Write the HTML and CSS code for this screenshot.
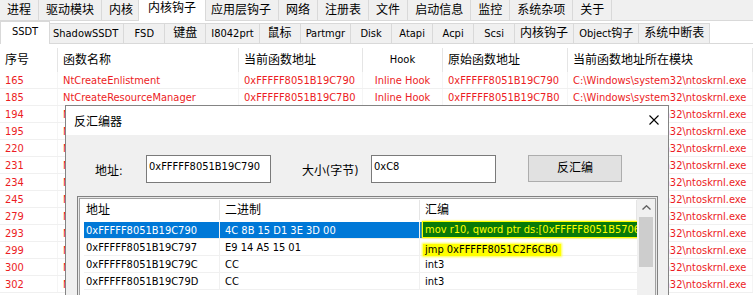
FILE: index.html
```html
<!DOCTYPE html>
<html lang="zh-CN">
<head>
    <meta charset="UTF-8">
    <title>内核钩子 - SSDT</title>
    <link rel="stylesheet" href="styles.css">
</head>
<body>
<div id="app">
    <!-- верхние вкладки -->
    <div class="tabs main-tabs">
        <div class="tab">进程</div>
        <div class="tab">驱动模块</div>
        <div class="tab">内核</div>
        <div class="tab active">内核钩子</div>
        <div class="tab">应用层钩子</div>
        <div class="tab">网络</div>
        <div class="tab">注册表</div>
        <div class="tab">文件</div>
        <div class="tab">启动信息</div>
        <div class="tab">监控</div>
        <div class="tab">系统杂项</div>
        <div class="tab">关于</div>
    </div>

    <div class="page">
        <div class="tabs sub-tabs">
            <div class="tab en active">SSDT</div>
            <div class="tab en">ShadowSSDT</div>
            <div class="tab en">FSD</div>
            <div class="tab">键盘</div>
            <div class="tab en">I8042prt</div>
            <div class="tab">鼠标</div>
            <div class="tab en">Partmgr</div>
            <div class="tab en">Disk</div>
            <div class="tab en">Atapi</div>
            <div class="tab en">Acpi</div>
            <div class="tab en">Scsi</div>
            <div class="tab">内核钩子</div>
            <div class="tab en">Object钩子</div>
            <div class="tab">系统中断表</div>
        </div>

        <div class="grid">
            <div class="grid-head">
                <div>序号</div>
                <div>函数名称</div>
                <div>当前函数地址</div>
                <div class="center en">Hook</div>
                <div>原始函数地址</div>
                <div>当前函数地址所在模块</div>
            </div>
            <div class="grid-row"><div>165</div><div>NtCreateEnlistment</div><div>0xFFFFF8051B19C790</div><div class="center">Inline Hook</div><div>0xFFFFF8051B19C790</div><div>C:\Windows\system32\ntoskrnl.exe</div></div>
            <div class="grid-row"><div>185</div><div>NtCreateResourceManager</div><div>0xFFFFF8051B19C7B0</div><div class="center">Inline Hook</div><div>0xFFFFF8051B19C7B0</div><div>C:\Windows\system32\ntoskrnl.exe</div></div>
            <!-- строки ниже закрыты окном, видны только номер и путь -->
            <div class="grid-row"><div>194</div><div>N</div><div></div><div></div><div></div><div>C:\Windows\system32\ntoskrnl.exe</div></div>
            <div class="grid-row"><div>195</div><div>N</div><div></div><div></div><div></div><div>C:\Windows\system32\ntoskrnl.exe</div></div>
            <div class="grid-row"><div>220</div><div>N</div><div></div><div></div><div></div><div>C:\Windows\system32\ntoskrnl.exe</div></div>
            <div class="grid-row"><div>231</div><div>N</div><div></div><div></div><div></div><div>C:\Windows\system32\ntoskrnl.exe</div></div>
            <div class="grid-row"><div>234</div><div>N</div><div></div><div></div><div></div><div>C:\Windows\system32\ntoskrnl.exe</div></div>
            <div class="grid-row"><div>245</div><div>N</div><div></div><div></div><div></div><div>C:\Windows\system32\ntoskrnl.exe</div></div>
            <div class="grid-row"><div>279</div><div>N</div><div></div><div></div><div></div><div>C:\Windows\system32\ntoskrnl.exe</div></div>
            <div class="grid-row"><div>293</div><div>N</div><div></div><div></div><div></div><div>C:\Windows\system32\ntoskrnl.exe</div></div>
            <div class="grid-row"><div>299</div><div>N</div><div></div><div></div><div></div><div>C:\Windows\system32\ntoskrnl.exe</div></div>
            <div class="grid-row"><div>300</div><div>N</div><div></div><div></div><div></div><div>C:\Windows\system32\ntoskrnl.exe</div></div>
            <div class="grid-row"><div>302</div><div>N</div><div></div><div></div><div></div><div>C:\Windows\system32\ntoskrnl.exe</div></div>
        </div>
    </div>

    <!-- окно дизассемблера -->
    <div class="dialog">
        <div class="dialog-title">
            <span>反汇编器</span>
            <svg class="close" width="10" height="10" viewBox="0 0 10 10"><path d="M0.5 0.5 L9.5 9.5 M9.5 0.5 L0.5 9.5" stroke="#000" stroke-width="1.1"/></svg>
        </div>
        <div class="form-row">
            <span class="label label-addr">地址:</span>
            <div class="field">0xFFFFF8051B19C790</div>
            <span class="label label-size">大小(字节)</span>
            <div class="field">0xC8</div>
            <div class="btn">反汇编</div>
        </div>
        <div class="list">
            <div class="list-inner">
                <div class="list-main">
                    <div class="list-head">
                        <div>地址</div>
                        <div>二进制</div>
                        <div>汇编</div>
                    </div>
                    <div class="list-row selected">
                        <div>0xFFFFF8051B19C790</div>
                        <div>4C 8B 15 D1 3E 3D 00</div>
                        <div class="asm"><span class="mark-green">mov r10, qword ptr ds:[0xFFFFF8051B5706</span></div>
                    </div>
                    <div class="list-row">
                        <div>0xFFFFF8051B19C797</div>
                        <div>E9 14 A5 15 01</div>
                        <div class="asm"><span class="mark-yellow">jmp 0xFFFFF8051C2F6CB0</span></div>
                    </div>
                    <div class="list-row">
                        <div>0xFFFFF8051B19C79C</div>
                        <div>CC</div>
                        <div class="asm">int3</div>
                    </div>
                    <div class="list-row">
                        <div>0xFFFFF8051B19C79D</div>
                        <div>CC</div>
                        <div class="asm">int3</div>
                    </div>
                </div>
                <div class="scrollbar">
                    <div class="scroll-up">
                        <svg width="9" height="5" viewBox="0 0 9 5"><path d="M0.5 4.5 L4.5 0.8 L8.5 4.5" fill="none" stroke="#606060" stroke-width="1.4"/></svg>
                    </div>
                    <div class="thumb"></div>
                </div>
            </div>
        </div>
    </div>
</div>
</body>
</html>
```

FILE: styles.css
```css
body {
    margin: 0;
    font-family: "DejaVu Sans Condensed", "DejaVu Sans", "Noto Sans CJK SC", sans-serif;
    font-size: 11px;
    color: #000;
    background: #f0f0f0;
}
#app {
    position: relative;
    width: 753px;
    height: 295px;
    overflow: hidden;
}

/* вкладки */
.tabs {
    display: flex;
    box-sizing: border-box;
}
.tab {
    padding: 0 7px;
    border-right: 1px solid #d9d9d9;
    font-size: 12px;
    white-space: nowrap;
    text-align: center;
}
.tab.en {
    font-size: 11px;
}
.main-tabs {
    height: 21px;
    background: #f0f0f0;
    border-bottom: 1px solid #d9d9d9;
}
.main-tabs .tab {
    line-height: 21px;
}
.main-tabs .tab.active {
    position: relative;
    background: #fff;
    margin: 0 -2px -1px -3px;
    padding: 0 9px;
    border-left: 1px solid #d9d9d9;
    line-height: 17px;
}
.page {
    background: #fff;
    height: 274px;
}
.sub-tabs {
    height: 23px;
    padding-left: 2px;
    border-bottom: 1px solid #d9d9d9;
}
.sub-tabs .tab {
    margin-top: 2px;
    padding: 0 5px;
    min-width: 30px;
    background: #f0f0f0;
    border-top: 1px solid #d9d9d9;
    line-height: 19px;
}
.sub-tabs .tab.active {
    position: relative;
    background: #fff;
    margin: 0 -2px -1px -2px;
    padding: 0 9px;
    border-left: 1px solid #d9d9d9;
    line-height: 20px;
}

/* основная таблица */
.grid-head,
.grid-row {
    display: grid;
    grid-template-columns: 58px 181px 124px 80px 125px 1fr;
}
.grid-head {
    height: 28px;
    padding-top: 4px;
    box-sizing: border-box;
    font-size: 12px;
}
.grid-head > div {
    line-height: 24px;
    padding-left: 5px;
    border-right: 1px solid #e5e5e5;
    white-space: nowrap;
}
.grid-head > div.en {
    font-size: 11px;
}
.grid-row {
    height: 17px;
    box-sizing: border-box;
    border-bottom: 1px solid #f0f0f0;
    color: #ec1c24;
}
.grid-row > div {
    padding: 2px 0 0 5px;
    line-height: 14px;
    border-right: 1px solid #f5f5f5;
    white-space: nowrap;
    overflow: hidden;
}
.grid-head > div.center,
.grid-row > div.center {
    text-align: center;
    padding-left: 0;
}

/* диалог */
.dialog {
    position: absolute;
    left: 65px;
    top: 105px;
    width: 604px;
    height: 210px;
    box-sizing: border-box;
    border: 1px solid rgba(0, 0, 0, 0.45);
    background: #f0f0f0;
}
.dialog-title {
    height: 29px;
    background: #fff;
    display: flex;
    align-items: center;
    justify-content: space-between;
    padding: 0 9px 0 8px;
    font-size: 12px;
}
.close {
    margin-top: -2px;
}
.form-row {
    display: flex;
    align-items: center;
    height: 28px;
    margin: 20px 0 0 29px;
}
.label {
    font-size: 12px;
    white-space: nowrap;
}
.label-addr {
    width: 51px;
}
.label-size {
    width: 69px;
    margin-left: 31px;
}
.field {
    width: 125px;
    height: 28px;
    box-sizing: border-box;
    border: 1px solid #7a7a7a;
    background: #fff;
    padding: 3px 2px;
    line-height: 16px;
}
.btn {
    width: 94px;
    height: 27px;
    margin: -1px 0 0 32px;
    box-sizing: border-box;
    border: 1px solid #adadad;
    background: #e1e1e1;
    font-size: 12px;
    line-height: 25px;
    text-align: center;
}

/* список дизассемблера */
.list {
    margin: 13px 10px 0 11px;
    border: 1px solid #828282;
    padding: 1px;
    background: #e8e8e8;
}
.list-inner {
    display: flex;
    height: 120px;
    border: 1px solid #a0a0a0;
    background: #fff;
}
.list-main {
    flex: 1;
    padding-left: 4px;
    overflow: hidden;
}
.list-head,
.list-row {
    display: grid;
    grid-template-columns: 136px 200px 1fr;
}
.list-head {
    height: 23px;
    box-sizing: border-box;
    padding: 1px 0 2px;
    font-size: 12px;
}
.list-head > div {
    line-height: 20px;
    padding-left: 5px;
    border-right: 1px solid #e5e5e5;
}
.list-head > div:first-child {
    padding-left: 2px;
}
.list-row {
    height: 17px;
    box-sizing: border-box;
    border-bottom: 1px solid #f0f0f0;
}
.list-row > div {
    padding: 2px 0 0 5px;
    line-height: 14px;
    border-right: 1px solid #f0f0f0;
    white-space: nowrap;
    overflow: hidden;
}
.list-row > div:first-child {
    padding-left: 2px;
}
.list-row.selected {
    background: #0078d7;
    color: #fff;
}
.list-row > div.asm {
    overflow: visible;
    border-right: none;
}
.list-row.selected > div.asm {
    padding: 0 0 0 3px;
}
.mark-green {
    display: block;
    height: 15px;
    padding-left: 2px;
    line-height: 16px;
    background: #087a08;
    color: #ffff00;
    overflow: hidden;
    box-shadow: 0 0 0 1px #ffff00, 0 0 2px 1px #f5f500;
}
.mark-yellow {
    display: inline-block;
    margin: 3px 0 0 -2px;
    padding: 0 3px 0 2px;
    line-height: 12px;
    background: #ffff00;
    box-shadow: 0 0 2px 1px #ffff40;
}
.scrollbar {
    width: 17px;
    background: #f0f0f0;
    border-left: 1px solid #f0f0f0;
}
.scroll-up {
    height: 17px;
    display: flex;
    align-items: center;
    justify-content: center;
}
.thumb {
    height: 50px;
    margin: 1px 2px 0 1px;
    background: #cdcdcd;
}
```
